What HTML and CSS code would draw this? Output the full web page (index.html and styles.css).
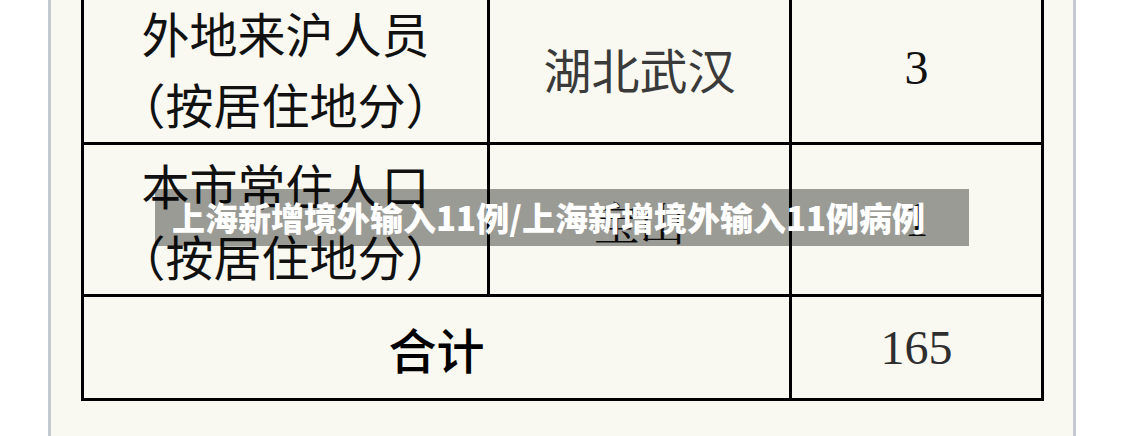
FILE: index.html
```html
<!DOCTYPE html>
<html lang="zh-CN">
<head>
<meta charset="utf-8">
<title>上海新增境外输入11例</title>
<link rel="stylesheet" href="styles.css">
</head>
<body>
<div class="page">
  <div class="grid">
    <div class="cell label">外地来沪人员<br>（按居住地分）</div>
    <div class="cell place">湖北武汉</div>
    <div class="cell num">3</div>
    <div class="cell label">本市常住人口<br>（按居住地分）</div>
    <div class="cell place serif">宝山</div>
    <div class="cell num">1</div>
    <div class="cell total">合计</div>
    <div class="cell num sum">165</div>
  </div>
  <div class="banner">上海新增境外输入11例/上海新增境外输入11例病例</div>
</div>
</body>
</html>
```

FILE: styles.css
```css
html, body {
  margin: 0;
  padding: 0;
  background: #ffffff;
  overflow: hidden;
}

body {
  width: 1125px;
  height: 436px;
  font-family: "Noto Sans CJK SC", "Noto Sans", sans-serif;
}

.page {
  position: relative;
  display: flow-root;
  margin-left: 48px;
  width: 1022px;
  height: 436px;
  border-left: 3px solid #c4c8d0;
  border-right: 3px solid #c4c8d0;
  background: #f9f9f1;
}

.grid {
  display: grid;
  grid-template-columns: 403px 299px 249px;
  grid-template-rows: 149px 149px 101px;
  gap: 3px;
  padding: 3px;
  width: 957px;
  margin-left: 30px;
  margin-top: -10px;
  background: #000000;
}

.cell {
  background: #f9f9f1;
  display: flex;
  align-items: center;
  justify-content: center;
  text-align: center;
}

.label {
  font-size: 48px;
  line-height: 71px;
  color: #111111;
}

.place {
  font-size: 48px;
  color: #3a3a3a;
}

.serif {
  font-family: "Noto Serif CJK SC", "Liberation Serif", serif;
  color: #111111;
  font-size: 46px;
}

.num {
  font-family: "Liberation Serif", serif;
  font-size: 48px;
  color: #111111;
}

.sum {
  color: #2e2e2e;
}

.total {
  grid-column: span 2;
  font-size: 48px;
  font-weight: 500;
  color: #000000;
}

.banner {
  position: absolute;
  left: 104px;
  top: 189px;
  width: 797px;
  height: 57px;
  padding-left: 17px;
  background: rgba(0, 0, 0, 0.375);
  color: #ffffff;
  font-size: 33px;
  font-weight: 900;
  line-height: 57px;
  white-space: nowrap;
}
```
